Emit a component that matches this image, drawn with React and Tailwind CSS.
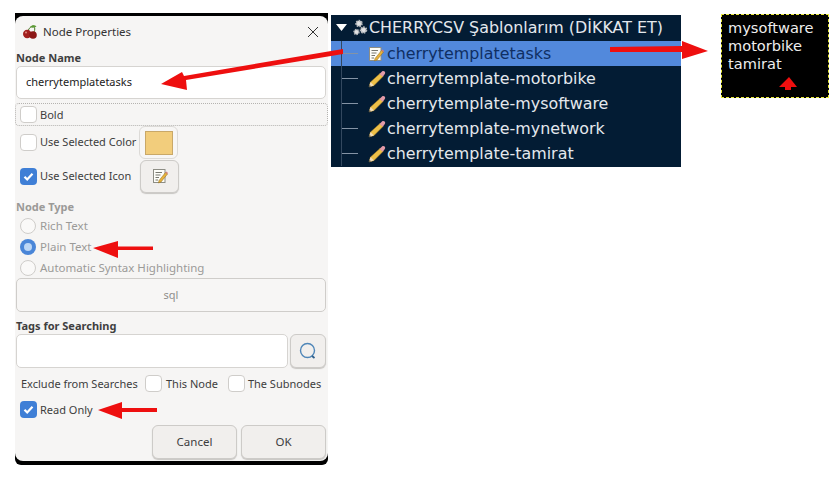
import React from "react";

const font = { fontFamily: '"Noto Sans", sans-serif' };

function Check({ checked }) {
  if (checked)
    return (
      <span className="flex h-[17px] w-[17px] shrink-0 items-center justify-center rounded-[4px] bg-[#3f7fd6]">
        <svg width="13" height="13" viewBox="0 0 13 13">
          <path d="M2.5 6.8 L5.2 9.5 L10.5 3.8" fill="none" stroke="#fff" strokeWidth="2.2" />
        </svg>
      </span>
    );
  return <span className="block h-[17px] w-[17px] shrink-0 rounded-[4px] border border-[#cfcdca] bg-white" />;
}

function Radio({ checked }) {
  if (checked)
    return (
      <span className="flex h-[16px] w-[16px] shrink-0 items-center justify-center rounded-full bg-[#4a86d8]">
        <span className="h-[8px] w-[8px] rounded-full bg-[#bcd6f5]" />
      </span>
    );
  return <span className="h-[16px] w-[16px] shrink-0 rounded-full border border-[#cfcdca] bg-[#faf9f8]" />;
}

function Cherry() {
  return (
    <svg width="16" height="16" viewBox="0 0 16 16">
      <path d="M6 7 C7 4 9 2 12 2 M12 2 C13 4 13 6 12 8" fill="none" stroke="#4d7a2c" strokeWidth="1" />
      <path d="M8 3 C10 0.5 13 1 14.5 2.5 C12 4 10 4 8 3Z" fill="#5c9a35" />
      <circle cx="5.2" cy="10" r="4.2" fill="#a3201f" />
      <circle cx="11" cy="11" r="3.8" fill="#8c1716" />
      <circle cx="4" cy="8.6" r="1" fill="#e08a80" />
    </svg>
  );
}

function NoteIcon({ size = 16 }) {
  return (
    <svg width={size} height={size} viewBox="0 0 16 16">
      <rect x="1.5" y="1.5" width="11.5" height="13" fill="#fdfdf8" stroke="#8d8d85" />
      <path d="M3.5 4.5H10M3.5 7H8.5M3.5 9.5H7M3.5 12H6" stroke="#77776f" strokeWidth="1" />
      <path d="M7 12.5 L13.5 4.5 L15.5 6 L9 14 L6.5 15Z" fill="#e8b23c" stroke="#8a6a1e" strokeWidth=".5" />
      <path d="M13.5 4.5 L15.5 6 L16 5 L14.5 3.5Z" fill="#d97b7b" />
    </svg>
  );
}

function Pencil() {
  return (
    <svg width="18" height="18" viewBox="0 0 18 18">
      <path d="M1 17 L2.5 12 L12 3.5 L15 6.5 L6 15.5Z" fill="#edc048" stroke="#a77f22" strokeWidth=".5" />
      <path d="M11.5 4 L14 1.5 C15 .8 16 1 16.6 1.6 C17.3 2.3 17.4 3.2 16.8 4 L14.8 6.8Z" fill="#e39aa8" />
      <path d="M1 17 L2.5 12 L6 15.5Z" fill="#f3dcb5" />
      <path d="M1 17 L1.6 15 L3 16.2Z" fill="#333" />
    </svg>
  );
}

function Gears() {
  return (
    <svg width="16" height="18" viewBox="0 0 16 18">
      <circle cx="7" cy="4.5" r="2.8" stroke="#b4b7bb" strokeWidth="2" strokeDasharray="1.5 1" fill="#e2e3e5" />
      <circle cx="11.5" cy="11" r="2.8" stroke="#b4b7bb" strokeWidth="2" strokeDasharray="1.5 1" fill="#e2e3e5" />
      <circle cx="4.5" cy="13" r="2.4" stroke="#b4b7bb" strokeWidth="1.6" strokeDasharray="1.2 1" fill="#e2e3e5" />
    </svg>
  );
}

function TreeRow({ label, selected, icon }) {
  return (
    <div className={`flex h-[25px] items-center ${selected ? "bg-[#5289dc]" : ""}`}>
      <span className="ml-[10px] flex h-full w-[17px] items-center border-l border-[#33485f]">
        <span className="h-[1px] w-full bg-[#8493a5]" />
      </span>
      <span className="ml-[10px] flex w-[18px] justify-start">{icon}</span>
      <span
        className={`ml-[1px] text-[15.9px] ${selected ? "text-[#0f2f63]" : "text-[#e4e8ed]"}`}
        style={{ fontFamily: '"DejaVu Sans", sans-serif' }}
      >
        {label}
      </span>
    </div>
  );
}

const btn = "flex items-center justify-center rounded-[6px] border border-[#cdcbc8] bg-[#f1efed] shadow-[0_1px_1px_#c8c6c3]";

export default function App() {
  return (
    <div className="relative h-[481px] w-[839px] overflow-hidden bg-white" style={font}>
      <div className="flex items-start pl-[15px] pt-[13px]">
        {/* dialog */}
        <div className="h-[452px] w-[313px] rounded-b-[6px] bg-black pt-[3px]">
          <div className="h-[445px] rounded-[8px] bg-[#f6f5f4] pt-[2px] text-[11px] text-[#3d3d3d]">
            <div className="flex h-[27px] items-center pl-[7px] pr-[9px]">
              <Cherry />
              <span className="ml-[5px] text-[11.5px] text-[#333]">Node Properties</span>
              <svg className="ml-auto" width="12" height="12" viewBox="0 0 12 12">
                <path d="M1 1 L11 11 M11 1 L1 11" stroke="#333" strokeWidth="1" />
              </svg>
            </div>
            <div className="mt-[4px] flex h-[17px] items-center pl-[1px] pt-[2px] font-bold text-[#3f3f3f]">Node Name</div>
            <div className="ml-[1px] flex h-[33px] w-[310px] items-center rounded-[5px] border border-[#d6d4d1] bg-white pl-[9px] text-[#222]">
              cherrytemplatetasks
            </div>
            <div className="mt-[4px] flex h-[23px] items-center gap-[3px] rounded-[4px] border border-dotted border-[#b5b3b0] pl-[4px]">
              <Check />
              <span className="pt-[2px]">Bold</span>
            </div>
            <div className="flex h-[33px] items-center pl-[5px]">
              <Check />
              <span className="ml-[3px]">Use Selected Color</span>
              <span className="ml-[3px] flex h-[33px] w-[39px] items-center justify-center rounded-[6px] border border-[#dcdad7] bg-[#f7f6f5]">
                <span className="h-[24px] w-[28px] border border-[#c9a868] bg-[#f2cd7c]" />
              </span>
            </div>
            <div className="flex h-[34px] items-center pl-[5px]">
              <Check checked />
              <span className="ml-[3px]">Use Selected Icon</span>
              <span className={`${btn} ml-[9px] h-[33px] w-[39px]`}>
                <NoteIcon />
              </span>
            </div>
            <div className="mt-[5px] flex h-[17px] items-center pl-[1px] pt-[2px] font-bold text-[#9b9a98]">Node Type</div>
            <div className="flex h-[21px] items-center gap-[4px] pl-[5px] text-[11.5px] text-[#9b9a98]">
              <Radio />
              <span>Rich Text</span>
            </div>
            <div className="flex h-[21px] items-center gap-[4px] pl-[5px] text-[11.5px] text-[#9b9a98]">
              <Radio checked />
              <span>Plain Text</span>
            </div>
            <div className="flex h-[21px] items-center gap-[4px] pl-[5px] text-[11.5px] text-[#9b9a98]">
              <Radio />
              <span>Automatic Syntax Highlighting</span>
            </div>
            <div className="ml-[1px] flex h-[34px] w-[310px] items-center justify-center rounded-[5px] border border-[#cfcdca] bg-[#f7f6f5] text-[#8f8e8c]">
              sql
            </div>
            <div className="mt-[5px] flex h-[17px] items-center pl-[1px] pt-[2px] font-bold text-[#3f3f3f]">Tags for Searching</div>
            <div className="ml-[1px] flex w-[310px] gap-[2px]">
              <div className="h-[34px] flex-1 rounded-[5px] border border-[#d6d4d1] bg-white" />
              <div className={`${btn} h-[34px] w-[36px]`}>
                <svg width="20" height="20" viewBox="0 0 20 20">
                  <circle cx="9.5" cy="9.5" r="7" fill="none" stroke="#4f86b8" strokeWidth="1.4" />
                  <path d="M14 15 L16.5 17" stroke="#2f5f8a" strokeWidth="1.8" />
                </svg>
              </div>
            </div>
            <div className="mt-[6px] flex h-[19px] items-center pl-[6px]">
              <span className="w-[118px] shrink-0 whitespace-nowrap pt-[2px]">Exclude from Searches</span>
              <span className="ml-[6px] flex"><Check /></span>
              <span className="ml-[4px] pt-[2px]">This Node</span>
              <span className="ml-[10px] flex"><Check /></span>
              <span className="ml-[3px] pt-[2px]">The Subnodes</span>
            </div>
            <div className="mt-[7px] flex h-[19px] items-center gap-[3px] pl-[5px]">
              <Check checked />
              <span className="pt-[2px]">Read Only</span>
            </div>
            <div className="mr-[2px] mt-[6px] flex justify-end gap-[4px] text-[11.5px]">
              <div className={`${btn} h-[34px] w-[85px]`}>Cancel</div>
              <div className={`${btn} h-[34px] w-[85px]`}>OK</div>
            </div>
          </div>
        </div>

        {/* tree */}
        <div className="ml-[3px] mt-[2px] h-[152px] w-[350px] bg-[#031c34]">
          <div className="flex h-[26px] items-center" style={{ fontFamily: '"DejaVu Sans", sans-serif' }}>
            <svg className="ml-[5px]" width="11" height="8" viewBox="0 0 11 8">
              <path d="M0 0 H11 L5.5 7Z" fill="#fff" />
            </svg>
            <span className="ml-[5px] flex"><Gears /></span>
            <span className="ml-[1px] text-[15.9px] text-[#e4e8ed]">CHERRYCSV Şablonlarım (DİKKAT ET)</span>
          </div>
          <TreeRow selected label="cherrytemplatetasks" icon={<NoteIcon />} />
          <TreeRow label="cherrytemplate-motorbike" icon={<Pencil />} />
          <TreeRow label="cherrytemplate-mysoftware" icon={<Pencil />} />
          <TreeRow label="cherrytemplate-mynetwork" icon={<Pencil />} />
          <TreeRow label="cherrytemplate-tamirat" icon={<Pencil />} />
        </div>

        {/* note */}
        <div
          className="ml-[40px] mt-[1px] h-[84px] w-[108px] border border-dashed border-[#e8e83a] bg-black pl-[6px] pt-[4px] text-[14.6px] leading-[18px] text-[#eeeeee]"
          style={{ fontFamily: '"DejaVu Sans", sans-serif' }}
        >
          <div>mysoftware</div>
          <div>motorbike</div>
          <div>tamirat</div>
        </div>
      </div>

      {/* red annotation arrows */}
      <svg className="absolute left-0 top-0" width="839" height="481" viewBox="0 0 839 481">
        <g fill="#ee0f0f" stroke="none">
          <path d="M343 54 L186 80 L187 90 L161 84 L182 72 L184 76 L343 49Z" />
          <path d="M610 47 L682 46 L682 41 L708 51 L682 59 L682 52 L610 52Z" />
          <path d="M153 246.5 H118 V241 L93 248 L118 258 V250 H153Z" />
          <path d="M157 408 H122 V402 L98 410 L122 419 V412 H157Z" />
          <path d="M779 87 L789 77 L797 87 H791 V90 H785 V87Z" />
        </g>
      </svg>
    </div>
  );
}
